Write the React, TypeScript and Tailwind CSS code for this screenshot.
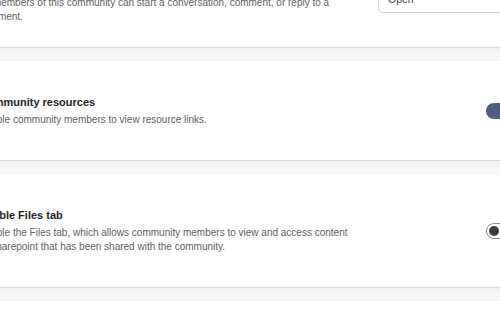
import React from 'react';

function Toggle({ on }: { on: boolean }) {
  return on ? (
    <div className="w-[34px] h-[16px] rounded-full bg-[#4b5d80] flex items-center justify-end px-[3px] shrink-0">
      <div className="w-[10px] h-[10px] rounded-full bg-white" />
    </div>
  ) : (
    <div className="w-[34px] h-[16px] rounded-full border border-[#8a8a8a] flex items-center px-[2px] shrink-0">
      <div className="w-[10px] h-[10px] rounded-full bg-[#3d3d3d]" />
    </div>
  );
}

function SettingCard({ title, lines, on }: { title: string; lines: string[]; on: boolean }) {
  return (
    <div className="bg-white shadow-[0_1px_1px_rgba(0,0,0,0.12)] pl-[20px] pr-[39px] py-[33px] flex items-center justify-between">
      <div className="flex flex-col gap-[3px]">
        <div className="text-[11px] leading-[16px] font-bold text-[#242424] whitespace-nowrap">{title}</div>
        <div className="text-[10px] leading-[14px] text-[#616161]">
          {lines.map((l) => (
            <div key={l} className="whitespace-nowrap">{l}</div>
          ))}
        </div>
      </div>
      <Toggle on={on} />
    </div>
  );
}

export default function App() {
  return (
    <div className="w-[500px] h-[330px] overflow-hidden bg-[#f5f5f5]" style={{ fontFamily: '"Liberation Sans", Arial, sans-serif' }}>
      <div className="-ml-[41px] w-[600px] flex flex-col gap-[14px]">
        <div className="bg-white shadow-[0_1px_1px_rgba(0,0,0,0.12)] -mt-[37px] pt-[33px] pb-[23px] pl-[20px] pr-[39px] flex items-start justify-between">
          <div className="text-[10px] leading-[14px] text-[#616161]">
            <div className="whitespace-nowrap">All members of this community can start a conversation, comment, or reply to a</div>
            <div className="whitespace-nowrap">comment.</div>
          </div>
          <div className="w-[142px] h-[26px] -mt-[9px] border border-[#d1d1d1] rounded-[4px] flex items-center px-[9px] text-[10.5px] text-[#424242] shrink-0">
            Open
          </div>
        </div>
        <SettingCard
          title="Community resources"
          lines={["Enable community members to view resource links."]}
          on={true}
        />
        <SettingCard
          title="Enable Files tab"
          lines={[
            "Enable the Files tab, which allows community members to view and access content",
            "in Sharepoint that has been shared with the community.",
          ]}
          on={false}
        />
        <div className="bg-white h-[60px]" />
      </div>
    </div>
  );
}
